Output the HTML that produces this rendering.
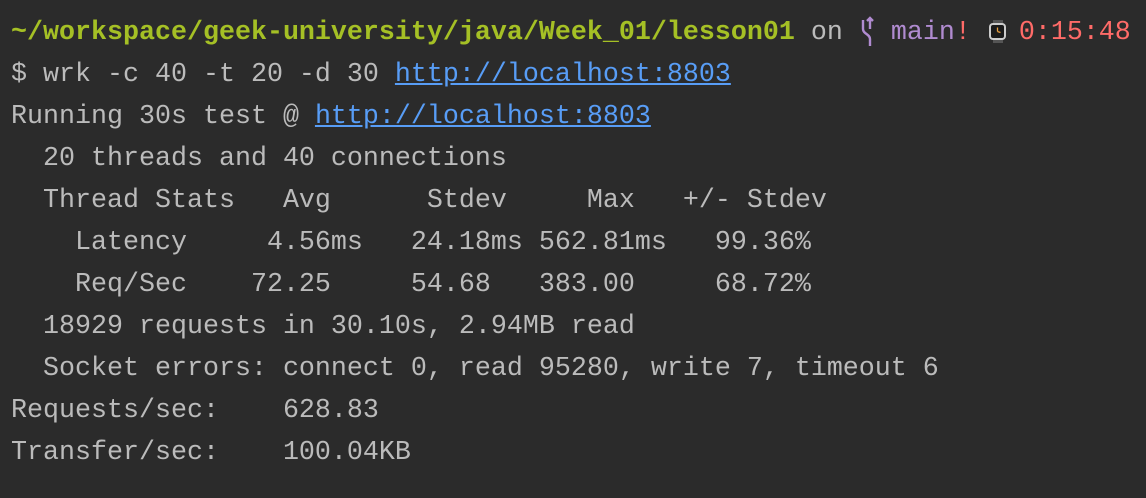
<!DOCTYPE html>
<html><head><meta charset="utf-8"><style>
html,body{margin:0;padding:0;background:#2b2b2b;width:1146px;height:498px;overflow:hidden}
pre{margin:0;padding:12px 0 0 11px;font-family:"Liberation Mono",monospace;font-size:26.67px;line-height:42px;color:#bbbbbb;white-space:pre}
.g{color:#a5c025;font-weight:bold}
.u{color:#589df6;text-decoration:underline}
.p{color:#b08bd0}
.r{color:#ff6b68}
.ic{display:inline-block;width:16px;height:1px;position:relative}
.ic svg{position:absolute;left:0;top:-24px}
</style></head><body><pre><span class="g">~/workspace/geek-university/java/Week_01/lesson01</span> on <span class="ic"><svg width="16" height="34" viewBox="0 0 16 34"><path d="M4 6v9c0 5 7 5 7 10v7M11 4v11M8 7l3-3 3 3" stroke="#b08bd0" stroke-width="2.4" fill="none"/></svg></span> <span class="p">main</span><span class="r">!</span> <span class="ic"><svg width="20" height="30" viewBox="0 0 20 30" style="left:1px;top:-20px"><rect x="5" y="2" width="10" height="5" fill="#555"/><rect x="5" y="20" width="10" height="5" fill="#555"/><rect x="1" y="5" width="17" height="17" rx="4" fill="#ccc"/><rect x="3" y="7" width="13" height="13" rx="2" fill="#1a1a1a"/><path d="M9.5 13.5l0-4M9.5 13.5l3 1" stroke="#e8a040" stroke-width="1.3"/></svg></span> <span class="r">0:15:48</span>
$ wrk -c 40 -t 20 -d 30 <span class="u">http://localhost:8803</span>
Running 30s test @ <span class="u">http://localhost:8803</span>
  20 threads and 40 connections
  Thread Stats   Avg      Stdev     Max   +/- Stdev
    Latency     4.56ms   24.18ms 562.81ms   99.36%
    Req/Sec    72.25     54.68   383.00     68.72%
  18929 requests in 30.10s, 2.94MB read
  Socket errors: connect 0, read 95280, write 7, timeout 6
Requests/sec:    628.83
Transfer/sec:    100.04KB</pre></body></html>
